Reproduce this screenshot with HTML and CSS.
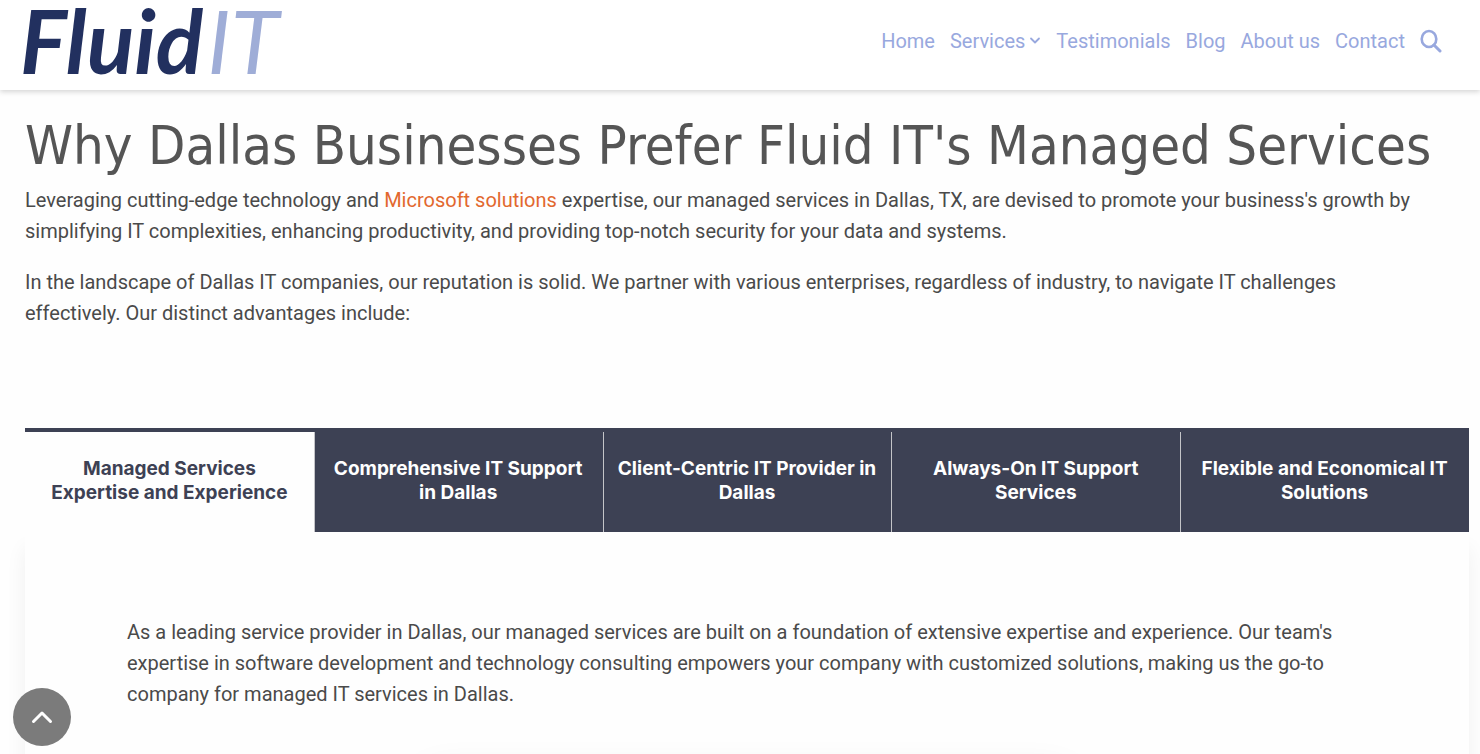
FILE: index.html
```html
<!DOCTYPE html>
<html lang="en">
<head>
    <meta charset="UTF-8">
    <meta name="viewport" content="width=device-width, initial-scale=1.0">
    <title>Managed Services Dallas - Fluid IT</title>
    <link rel="stylesheet" href="styles.css">
</head>
<body>
    <header class="site-header">
        <a class="logo" href="#" aria-label="Fluid IT home"><span class="logo-main">Fluid</span><span class="logo-sub">IT</span></a>
        <nav class="main-nav">
            <a href="#">Home</a>
            <a href="#" class="has-menu">Services
                <svg width="12" height="8" viewBox="0 0 12 8" fill="none" stroke="currentColor" stroke-width="1.8" stroke-linecap="round" stroke-linejoin="round"><path d="M2 1.500l4 4 4-4"/></svg>
            </a>
            <a href="#">Testimonials</a>
            <a href="#">Blog</a>
            <a href="#">About us</a>
            <a href="#">Contact</a>
            <button class="search-btn" type="button" aria-label="Search">
                <svg width="22" height="24" viewBox="0 0 22 24" fill="none" stroke="currentColor" stroke-width="2.6"><ellipse cx="9" cy="10" rx="7.300" ry="8"/><path d="M14 16l6 6" stroke-width="3" stroke-linecap="round"/></svg>
            </button>
        </nav>
    </header>

    <main class="content">
        <h1>Why Dallas Businesses Prefer Fluid IT's Managed Services</h1>
        <div class="intro">
            <p>Leveraging cutting-edge technology and <a href="#">Microsoft solutions</a> expertise, our managed services in Dallas, TX, are devised to promote your business's growth by simplifying IT complexities, enhancing productivity, and providing top-notch security for your data and systems.</p>
            <p>In the landscape of Dallas IT companies, our reputation is solid. We partner with various enterprises, regardless of industry, to navigate IT challenges effectively. Our distinct advantages include:</p>
        </div>

        <section class="tabs">
            <div class="tab-list" role="tablist">
                <button type="button" class="tab active" role="tab" aria-selected="true">Managed Services Expertise and Experience</button>
                <button type="button" class="tab" role="tab">Comprehensive IT Support in Dallas</button>
                <button type="button" class="tab" role="tab">Client-Centric IT Provider in Dallas</button>
                <button type="button" class="tab" role="tab">Always-On IT Support Services</button>
                <button type="button" class="tab" role="tab">Flexible and Economical IT Solutions</button>
            </div>
            <div class="tab-panel" role="tabpanel">
                <p>As a leading service provider in Dallas, our managed services are built on a foundation of extensive expertise and experience. Our team's expertise in software development and technology consulting empowers your company with customized solutions, making us the go-to company for managed IT services in Dallas.</p>
                <div class="media"></div>
            </div>
        </section>
    </main>

    <button class="back-to-top" type="button" aria-label="Back to top">
        <svg width="22" height="14" viewBox="0 0 22 14" fill="none" stroke="currentColor" stroke-width="3" stroke-linecap="round" stroke-linejoin="round"><path d="M2.500 11.500L11 3l8.500 8.500"/></svg>
    </button>
</body>
</html>
```
FILE: styles.css
```css
* {
    box-sizing: border-box;
}
html {
    height: 100%;
    overflow: hidden;
}
body {
    margin: 0;
    height: 100%;
    overflow: hidden;
    background: #fefefe;
    color: #4a4a4a;
    font-family: Roboto, sans-serif;
    font-size: 20px;
    line-height: 31px;
}
a {
    color: #e2682e;
    text-decoration: none;
}
button {
    border: none;
    font: inherit;
    cursor: pointer;
}

/* header */
.site-header {
    display: flex;
    justify-content: space-between;
    align-items: center;
    height: 90px;
    padding: 0 38px 8px 20px;
    background: #fff;
    box-shadow: 0 2px 5px rgba(0, 0, 0, 0.16);
}
.logo {
    display: flex;
    gap: 4px;
    padding-bottom: 2px;
    font-family: Lato, sans-serif;
    font-size: 88px;
    line-height: 80px;
    font-style: italic;
}
.logo-main {
    color: #22305f;
    font-weight: 700;
}
.logo-sub {
    color: #9fadd7;
    font-weight: 400;
}
.main-nav {
    display: flex;
    align-items: center;
    gap: 15px;
}
.main-nav a,
.search-btn {
    color: #98a8de;
}
.has-menu {
    display: flex;
    align-items: center;
    gap: 4px;
}
.search-btn {
    display: flex;
    padding: 0;
    background: none;
}

/* intro */
.content {
    padding: 21px 11px 0 25px;
}
h1 {
    margin: 0 0 4px;
    color: #555;
    font-family: "DejaVu Sans Condensed", Tahoma, sans-serif;
    font-size: 54px;
    font-weight: 400;
    line-height: 70px;
}
p {
    margin: 0 0 20px;
}
.intro {
    padding-right: 40px;
}

/* tabs */
.tabs {
    margin-top: 99px;
}
.tab-list {
    display: grid;
    grid-template-columns: repeat(5, 1fr);
}
.tab {
    height: 104px;
    padding: 0 12px 2px;
    border-top: 4px solid #3d4154;
    background: #3d4154;
    box-shadow: inset 1px 0 #c4c4c8;
    color: #fff;
    font-family: Inter, sans-serif;
    font-size: 19px;
    font-weight: 700;
    line-height: 24px;
}
.tab.active {
    background: #fefefe;
    box-shadow: none;
    color: #3d4154;
}
.tab-panel {
    padding: 85px 102px 0;
    box-shadow: 0 16px 20px rgba(0, 0, 0, 0.06);
}
.media {
    width: 640px;
    height: 300px;
    max-width: 100%;
    margin: 68px auto 0;
    border-radius: 8px;
    box-shadow: 0 0 40px rgba(0, 0, 0, 0.12);
}

.back-to-top {
    position: fixed;
    left: 13px;
    bottom: 8px;
    display: flex;
    align-items: center;
    justify-content: center;
    width: 58px;
    height: 58px;
    border-radius: 50%;
    background: #7b7b7b;
    color: #fff;
}
```
